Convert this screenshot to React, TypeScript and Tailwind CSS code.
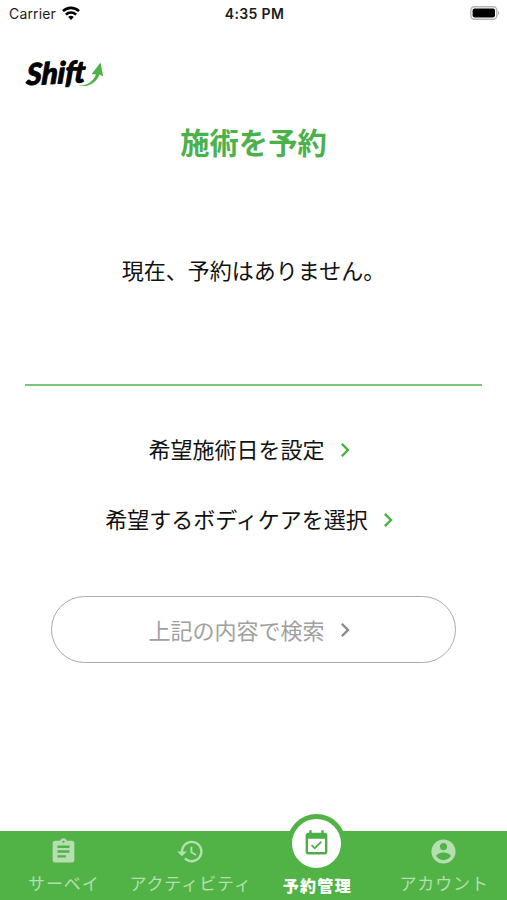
import { clsx } from 'clsx'

const TABS = [
  {
    label: 'サーベイ',
    icon: 'M19 3h-4.18C14.4 1.84 13.3 1 12 1c-1.3 0-2.4.84-2.82 2H5c-1.1 0-2 .9-2 2v14c0 1.1.9 2 2 2h14c1.1 0 2-.9 2-2V5c0-1.1-.9-2-2-2zm-7 0c.55 0 1 .45 1 1s-.45 1-1 1-1-.45-1-1 .45-1 1-1zm2 14H7v-2h7v2zm3-4H7v-2h10v2zm0-4H7V7h10v2z',
  },
  {
    label: 'アクティビティ',
    icon: 'M13 3c-4.97 0-9 4.03-9 9H1l3.89 3.89.07.14L9 12H6c0-3.87 3.13-7 7-7s7 3.13 7 7-3.13 7-7 7c-1.93 0-3.68-.79-4.94-2.06l-1.42 1.42C8.27 19.99 10.51 21 13 21c4.97 0 9-4.03 9-9s-4.03-9-9-9zm-1 5v5l4.28 2.54.72-1.21-3.5-2.08V8H12z',
  },
  {
    label: '予約管理',
    icon: 'M16.53 11.06L15.47 10l-4.88 4.88-2.12-2.12-1.06 1.06L10.59 17l5.94-5.94zM19 3h-1V1h-2v2H8V1H6v2H5c-1.11 0-1.99.9-1.99 2L3 19c0 1.1.89 2 2 2h14c1.1 0 2-.9 2-2V5c0-1.1-.9-2-2-2zm0 16H5V8h14v11z',
    active: true,
  },
  {
    label: 'アカウント',
    icon: 'M12 2C6.48 2 2 6.48 2 12s4.48 10 10 10 10-4.48 10-10S17.52 2 12 2zm0 3c1.66 0 3 1.34 3 3s-1.34 3-3 3-3-1.34-3-3 1.34-3 3-3zm0 14.2c-2.5 0-4.71-1.28-6-3.22.03-1.99 4-3.08 6-3.08 1.99 0 5.97 1.09 6 3.08-1.29 1.94-3.5 3.22-6 3.22z',
  },
]

function Icon({ path, className }: { path: string; className?: string }) {
  return (
    <svg viewBox="0 0 24 24" fill="currentColor" className={clsx('shrink-0', className)}>
      <path d={path} />
    </svg>
  )
}

function Chevron({ className }: { className?: string }) {
  return (
    <Icon path="M10 6L8.59 7.41 13.17 12l-4.58 4.59L10 18l6-6z" className={clsx('mt-[3px] size-7', className)} />
  )
}

function StatusBar() {
  return (
    <div className="grid h-7 grid-cols-3 items-center pr-[7px] pl-[9px] font-['Inter',sans-serif] text-[14px] leading-7 text-[#1c1c1c]">
      <div className="flex items-center gap-1.5">
        <span className="tracking-[0.15px]">Carrier</span>
        <svg viewBox="0 0 18 14" className="-mt-0.5 h-3.5 w-[18px]" fill="none" stroke="#000" strokeWidth="2.6">
          <path d="M1 5.1a11.5 11.5 0 0 1 16 0" />
          <path d="M3.9 8.6a7.3 7.3 0 0 1 10.2 0" />
          <path d="M9 14l-2.800-3a4 4 0 0 1 5.600 0z" fill="#000" stroke="none" />
        </svg>
      </div>
      <span className="text-center font-semibold tracking-[0.35px]">4:35 PM</span>
      <svg viewBox="0 0 31 14" className="-mt-0.5 h-3.5 w-[31px] justify-self-end">
        <rect x="1.8" y=".8" width="26" height="12.4" rx="3.6" fill="#fff" stroke="#b5b5b5" strokeWidth="1.4" />
        <rect x="3.6" y="2.6" width="22.4" height="8.8" rx="1.8" fill="#000" />
        <path d="M29 4.8c1.8.7 1.8 3.7 0 4.4z" fill="#b5b5b5" />
      </svg>
    </div>
  )
}

function Logo() {
  return (
    <svg viewBox="0 0 80 36" className="h-9 w-20 overflow-visible" aria-label="Shift">
      <text
        x="4"
        y="29"
        transform="rotate(-3 4 29) skewX(-6)"
        textLength="59"
        lengthAdjust="spacingAndGlyphs"
        strokeWidth=".9"
        strokeLinejoin="round"
        className="fill-black stroke-black font-['Lato',sans-serif] text-[30px] font-black italic"
      >
        Shift
      </text>
      <path d="M52 29c8 1.500 15.500-2 19-10.500l-4.300-.5L75.500 6.500l2.700 14-3.600-2C71 27.500 62 32.500 52 29z" fill="#4fb247" />
    </svg>
  )
}

export default function App() {
  return (
    <div className="flex h-[900px] w-[507px] flex-col overflow-hidden bg-white font-['Noto_Sans_CJK_JP',sans-serif] text-[22px] leading-8 text-[#111]">
      <StatusBar />

      <main className="flex flex-1 flex-col px-[25px] pt-[28px]">
        <Logo />
        <h1 className="mt-[29px] text-center text-[29.3px] leading-10 font-bold text-[#4bb14b]">施術を予約</h1>
        <p className="mt-[92px] text-center">現在、予約はありません。</p>
        <hr className="mt-[99px] border-t-2 border-[#78c677]" />

        <button className="mt-[46px] flex items-center justify-center gap-1.5">
          希望施術日を設定
          <Chevron className="text-[#43b540]" />
        </button>
        <button className="mt-[38px] flex items-center justify-center gap-1.5">
          希望するボディケアを選択
          <Chevron className="text-[#43b540]" />
        </button>

        <button className="mx-[26px] mt-[62px] flex h-[67px] items-center justify-center gap-1.5 rounded-full border-[1.5px] border-[#ababab] pb-[2px] text-[#a0a0a0]">
          上記の内容で検索
          <Chevron className="text-[#8c8c8c]" />
        </button>
      </main>

      <nav className="grid h-[69px] grid-cols-4 bg-[#51b346] text-[17px] leading-6">
        {TABS.map((tab) =>
          tab.active ? (
            <div key={tab.label} className="-mt-[17px] flex flex-col items-center text-white">
              <div className="flex size-[59px] items-center justify-center rounded-full border-[5px] border-[#51b346] bg-white text-[#4bb046]">
                <Icon path={tab.icon} className="size-[29px]" />
              </div>
              <span className="pl-[1px] text-[16px] font-black tracking-[1.3px]">{tab.label}</span>
            </div>
          ) : (
            <div key={tab.label} className="flex flex-col items-center pt-[6px] text-[#b5dfb0]">
              <Icon path={tab.icon} className="size-[29px]" />
              <span className="mt-[5px] pl-[1px] tracking-[0.9px] whitespace-nowrap">{tab.label}</span>
            </div>
          ),
        )}
      </nav>
    </div>
  )
}
